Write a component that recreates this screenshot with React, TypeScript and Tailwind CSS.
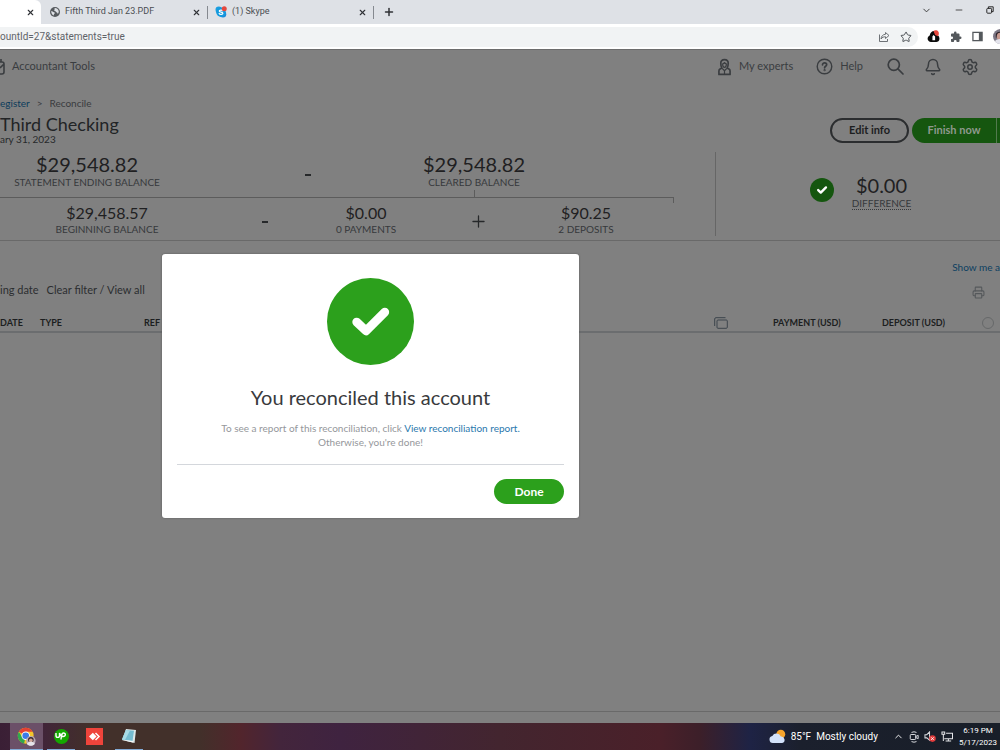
import React from "react";
import { Bell, Settings, Star, X, Plus, ChevronDown, ChevronUp, Minus, Printer } from "lucide-react";

function GlobeIcon() {
  return (
    <svg viewBox="0 0 16 16" className="size-[10px] shrink-0" aria-hidden="true">
      <circle cx="8" cy="8" r="8" fill="#565a5e" />
      <path d="M2 6.500c2 0 2.400 1.800 4.400 1.800 1.600 0 1.600 2 .6 2.600-.8.5-.6 2.300-1.400 2.500C3.400 12.600 1.700 10 2 6.500zM7.500 1.800c2.900-.2 5.600 1.700 6.400 4.600.3 1.500-.4 3.400-1.300 4.300-.9-.1-.7-1.900-2-2.200-1.600-.3-1-2.100-2.600-2.300-1.400-.2-1.800-1.200-.9-2 .6-.5-.2-1.500.4-2.400z" fill="#dee1e6" />
    </svg>
  );
}

function SkypeIcon() {
  return (
    <svg viewBox="0 0 24 24" className="size-[12px] shrink-0" aria-hidden="true">
      <circle cx="7.500" cy="7.500" r="6.500" fill="#1b9fe0" />
      <circle cx="16" cy="16.500" r="6.500" fill="#1b8bdc" />
      <circle cx="12" cy="12.500" r="9.500" fill="#149ade" />
      <path d="M15.500 9.500c-1-2-7-2-7 .6 0 3 7.300 1.600 7.300 4.600 0 2.800-6.300 2.900-7.500.2" fill="none" stroke="#fff" strokeWidth="2.400" strokeLinecap="round" />
      <circle cx="18.500" cy="5.500" r="5" fill="#e5483e" />
    </svg>
  );
}

function ShareIcon() {
  return (
    <svg viewBox="0 0 24 24" className="size-[12px]" fill="none" stroke="#5f6368" strokeWidth="1.800" strokeLinejoin="round" aria-hidden="true">
      <path d="M3 7v14h16v-5" />
      <path d="M15 3l7 6-7 6v-3.500c-4 0-6.500 1-9 4.500.5-5.500 3.500-9 9-9.500z" />
    </svg>
  );
}

function CloudExtensionIcon() {
  return (
    <svg viewBox="0 0 24 24" className="size-[13px]" aria-hidden="true">
      <path d="M7 22a6 6 0 0 1-5-9c1-2 2-2.500 3-3C6 5 9 2 13 2c4 0 6 3 6 7 3 1.500 4 4 4 7 0 4-3 6-6 6z" fill="#0b0b0b" />
      <path d="M12 9l3 3v7h-5v-7z" fill="#fff" />
      <path d="M12 2c2-2 7-2 9 1 1.500 2.500 1 6-1 8.500L15 9z" fill="#e8483d" />
    </svg>
  );
}

function PuzzleIcon() {
  return (
    <svg viewBox="0 0 24 24" className="size-[12px]" fill="#54585c" aria-hidden="true">
      <path d="M20.500 11H19V7a2 2 0 0 0-2-2h-4V3.500a2.500 2.500 0 0 0-5 0V5H4a2 2 0 0 0-2 2v3.800h1.500a2.700 2.700 0 0 1 0 5.400H2V20c0 1.100.9 2 2 2h3.800v-1.500a2.700 2.700 0 0 1 5.400 0V22H17a2 2 0 0 0 2-2v-4h1.500a2.500 2.500 0 0 0 0-5z" />
    </svg>
  );
}

function PanelIcon() {
  return (
    <svg viewBox="0 0 12 12" className="size-[11px]" aria-hidden="true">
      <rect x="1" y="1.500" width="10" height="9" fill="none" stroke="#54585c" strokeWidth="1.400" />
      <rect x="7.500" y="1.500" width="3.500" height="9" fill="#54585c" />
    </svg>
  );
}

function AvatarIcon() {
  return (
    <svg viewBox="0 0 16 16" className="size-[15px] shrink-0" aria-hidden="true">
      <circle cx="8" cy="8" r="8" fill="#7b7684" />
      <path d="M3 6c0-4 10-4 10 0v3H3z" fill="#2d2329" />
      <circle cx="8" cy="8" r="4" fill="#c99a90" />
      <path d="M2 13c2-3 10-3 12 0-3 4-9 4-12 0z" fill="#e4e4ec" />
    </svg>
  );
}

function RestoreIcon() {
  return (
    <svg viewBox="0 0 10 10" className="size-[8px]" fill="none" stroke="#222" strokeWidth="1.200" aria-hidden="true">
      <rect x="1" y="3" width="6" height="6" rx="1" />
      <path d="M3 3V1h6v6H7" />
    </svg>
  );
}

function ExpertIcon() {
  return (
    <svg viewBox="0 0 14 18" className="h-[18px] w-[13px]" fill="none" stroke="#3a3d40" strokeWidth="1.800" strokeLinejoin="round" aria-hidden="true">
      <path d="M7 1C4.200 1 3 2.800 3 5c0 2.500.3 3.800 1.200 5.200L2.200 11.200C1.300 11.700 1 12.300 1 13.200V17h12v-3.800c0-.9-.3-1.500-1.200-2l-2-1C10.700 8.800 11 7.500 11 5c0-2.200-1.200-4-4-4z" />
      <path d="M5 5.500c0 2.500.5 4 2 4s2-1.500 2-4c-1 0-1.600-.4-2-1.200-.4.8-1 1.200-2 1.200zM4.500 10.500L7 13l2.500-2.500M7 13v4" strokeWidth="1.300" />
    </svg>
  );
}

function HelpIcon() {
  return (
    <svg viewBox="0 0 18 18" className="size-[17px]" fill="none" stroke="#3a3d40" strokeWidth="1.500" strokeLinecap="round" aria-hidden="true">
      <circle cx="9" cy="9" r="7.700" />
      <path d="M6.900 7.200c0-2.900 4.400-2.700 4.400 0 0 1.500-2.200 1.600-2.200 3.200" strokeWidth="1.800" />
      <circle cx="9.100" cy="12.900" r=".4" />
    </svg>
  );
}

function SearchIcon() {
  return (
    <svg viewBox="0 0 17 17" className="size-[17px]" fill="none" stroke="#3a3d40" strokeWidth="1.700" strokeLinecap="round" aria-hidden="true">
      <circle cx="6.800" cy="6.800" r="5.600" />
      <path d="M10.900 10.900L16 16" />
    </svg>
  );
}

function CheckBadge({ className }: { className: string }) {
  return (
    <svg viewBox="0 0 88 88" className={className} aria-hidden="true">
      <circle cx="44" cy="44" r="44" fill="currentColor" />
      <path d="M30 44.500l9.500 9L58.500 34.500" fill="none" stroke="#fff" strokeWidth="8.800" strokeLinecap="round" strokeLinejoin="round" />
    </svg>
  );
}

function BrowserTab({ icon, title, className }: { icon: React.ReactNode; title: string; className: string }) {
  return (
    <div className={"flex items-center " + className}>
      {icon}
      <span className="ml-[5px] flex-1 truncate text-[9px] text-[#4a4e52]">{title}</span>
      <button aria-label={"Close " + title} className="mr-[6px]">
        <X className="size-[9px] text-[#303236]" strokeWidth={3} />
      </button>
    </div>
  );
}

function BrowserChrome() {
  return (
    <header className="font-[Roboto,'Open_Sans',sans-serif]">
      <div className="flex h-6 items-stretch bg-[#dee1e6]">
        <div className="flex w-[41px] items-center justify-end rounded-tr-md bg-white">
          <button aria-label="Close tab" className="mr-[6px]">
            <X className="size-[9px] text-[#303236]" strokeWidth={3} />
          </button>
        </div>
        <div className="flex flex-1 items-center">
          <BrowserTab icon={<GlobeIcon />} title="Fifth Third Jan 23.PDF" className="ml-[9px] w-[157px]" />
          <span className="h-[13px] w-px bg-[#85898f]" />
          <BrowserTab icon={<SkypeIcon />} title="(1) Skype" className="ml-[7px] w-[158px]" />
          <span className="h-[13px] w-px bg-[#85898f]" />
          <button aria-label="New tab" className="ml-[9px]">
            <Plus className="size-3 text-[#303236]" strokeWidth={3} />
          </button>
        </div>
        <div className="flex items-center gap-[22px] pr-[6px] pb-1">
          <button aria-label="Search tabs"><ChevronDown className="size-[11px] text-[#333]" /></button>
          <button aria-label="Minimize"><Minus className="size-[10px] text-[#333]" /></button>
          <button aria-label="Restore"><RestoreIcon /></button>
        </div>
      </div>
      <div className="flex h-[25px] items-center overflow-hidden bg-white">
        <div className="flex h-[20px] flex-1 items-center rounded-r-full bg-[#f1f3f4] pr-[6px]">
          <input
            aria-label="Address"
            readOnly
            value="ountId=27&statements=true"
            className="min-w-0 flex-1 bg-transparent text-[10px] text-[#5f6368] outline-none"
          />
          <button aria-label="Share" className="mr-[10px]"><ShareIcon /></button>
          <button aria-label="Bookmark"><Star className="size-3 text-[#4e5256]" /></button>
        </div>
        <div className="flex w-[82px] shrink-0 items-center gap-[10px] pl-[9px]">
          <button aria-label="Cloud extension"><CloudExtensionIcon /></button>
          <button aria-label="Extensions"><PuzzleIcon /></button>
          <button aria-label="Side panel"><PanelIcon /></button>
          <button aria-label="Profile"><AvatarIcon /></button>
        </div>
      </div>
    </header>
  );
}

function TopNav() {
  return (
    <nav className="flex h-[34px] items-center border-t border-[#6c6c6c] pr-[21px] text-[11px] text-[#3a3d40]">
      <button className="flex items-center gap-[7px]">
        <svg viewBox="0 0 5 16" className="h-[16px] w-[5px]" fill="none" stroke="#3a3d40" strokeWidth="1.600" aria-hidden="true">
          <path d="M0 3h2q2 0 2 2v8q0 2-2 2H0M0 9l4-4M1 0v3" />
        </svg>
        Accountant Tools
      </button>
      <button className="ml-auto flex items-center gap-2"><ExpertIcon />My experts</button>
      <button className="ml-[23px] flex items-center gap-[7px]"><HelpIcon />Help</button>
      <button aria-label="Search" className="ml-[24px]"><SearchIcon /></button>
      <button aria-label="Notifications" className="ml-5"><Bell className="size-[18px]" strokeWidth={2} /></button>
      <button aria-label="Settings" className="ml-[19px]"><Settings className="size-[18px]" strokeWidth={2} /></button>
    </nav>
  );
}

function Amount({ value, label, large = false }: { value: string; label: string; large?: boolean }) {
  return (
    <div className="text-center whitespace-nowrap">
      <div className={large ? "text-[20px] leading-6 text-[#1f2022]" : "text-[16px] leading-5 text-[#1f2022]"}>{value}</div>
      <div className="text-[10px] leading-3 text-[#37393c]">{label}</div>
    </div>
  );
}

function Summary() {
  return (
    <section className="grid grid-cols-[716fr_284fr] border-b border-[#696969] pt-[6px] pb-1">
      <div className="border-r border-[#666] pb-px">
        <div className="grid grid-cols-[208fr_200fr_132fr_175fr]">
          <div className="pr-[34px]"><Amount large value="$29,548.82" label="STATEMENT ENDING BALANCE" /></div>
          <div className="flex items-center justify-center"><span className="h-[2px] w-[6px] bg-[#26282a]" /></div>
          <div>
            <Amount large value="$29,548.82" label="CLEARED BALANCE" />
            <div className="mx-auto mt-[2px] h-[7px] w-px bg-[#5c5c5c]" />
          </div>
        </div>
        <div className="mr-[41px] h-[6px] border-t border-r border-[#5c5c5c]" />
        <div className="grid grid-cols-[214fr_102fr_100fr_124fr_92fr_83fr]">
          <Amount value="$29,458.57" label="BEGINNING BALANCE" />
          <div className="flex items-center justify-center pt-[6px]"><span className="h-[2px] w-[6px] bg-[#26282a]" /></div>
          <Amount value="$0.00" label="0 PAYMENTS" />
          <div className="flex items-center justify-center pt-1"><Plus className="size-[19px] text-[#26282a]" strokeWidth={1.6} /></div>
          <Amount value="$90.25" label="2 DEPOSITS" />
        </div>
      </div>
      <div className="flex items-start justify-center gap-[18px] pt-[21px] pl-[5px]">
        <CheckBadge className="mt-[5px] size-6 text-[#15560f]" />
        <div className="text-center">
          <div className="text-[20px] leading-6 text-[#1f2022]">$0.00</div>
          <div className="border-b border-dotted border-[#37393c] text-[10px] leading-3 text-[#37393c]">DIFFERENCE</div>
        </div>
      </div>
    </section>
  );
}

function Transactions() {
  return (
    <section className="flex flex-1 flex-col">
      <div className="flex h-[73px] justify-between pt-[18px]">
        <div className="flex items-center gap-2 pt-[8px] text-[11px] text-[#2c2e30]">
          <span>ing date</span>
          <button>Clear filter / View all</button>
        </div>
        <div className="flex flex-col gap-[11px] whitespace-nowrap">
          <a href="#around" className="text-[10px] leading-4 text-[#0c3f60]">Show me a</a>
          <button aria-label="Print" className="ml-5 self-start"><Printer className="size-[13px] text-[#55585b]" /></button>
        </div>
      </div>
      <table className="w-full table-fixed border-b-2 border-[#6b6d6f] text-left text-[9px] text-[#1c1e20]">
        <colgroup>
          <col className="w-[4%]" />
          <col className="w-[10.4%]" />
          <col className="w-[57%]" />
          <col className="w-[5.9%]" />
          <col className="w-[10.9%]" />
          <col className="w-[10%]" />
          <col />
        </colgroup>
        <thead>
          <tr className="h-[18px] whitespace-nowrap">
            <th>DATE</th>
            <th>TYPE</th>
            <th>REF</th>
            <th>
              <button aria-label="Copy" className="block">
                <svg viewBox="0 0 14 12" className="h-[12px] w-[14px]" fill="none" stroke="#3c444c" aria-hidden="true">
                  <path d="M.7 9V2q0-1.300 1.300-1.300h9.500" />
                  <rect x="3" y="3" width="10.300" height="8.300" rx="1" />
                </svg>
              </button>
            </th>
            <th>PAYMENT (USD)</th>
            <th>DEPOSIT (USD)</th>
            <th>
              <input type="radio" aria-label="Select all" className="block size-[12px] appearance-none rounded-full border border-[#666869]" />
            </th>
          </tr>
        </thead>
      </table>
      <div className="mb-[11px] flex-1 border-b border-[#696969]" />
    </section>
  );
}

function SuccessDialog() {
  return (
    <div
      role="dialog"
      aria-labelledby="dialog-title"
      className="absolute top-[254px] left-[162px] flex w-[417px] flex-col items-center rounded-[3px] bg-white px-[15px] pt-6 pb-[14px] shadow-[0_0_2px_#555]"
    >
      <CheckBadge className="size-[87px] text-[#2ca01c]" />
      <h2 id="dialog-title" className="mt-[18px] text-[20px] leading-7 text-[#393a3d]">You reconciled this account</h2>
      <p className="mt-[10px] text-center text-[10px] leading-[14px] text-[#95979b]">
        To see a report of this reconciliation, click{" "}
        <a href="#report" className="text-[#2a78ad]">View reconciliation report.</a>
        <br />
        Otherwise, you're done!
      </p>
      <div className="mt-[15px] flex w-full justify-end border-t border-[#d4d7dc] pt-[14px]">
        <button className="h-[25px] w-[70px] rounded-full bg-[#2ca01c] text-[12px] font-bold text-white">Done</button>
      </div>
    </div>
  );
}

function ChromeIcon() {
  return (
    <svg viewBox="0 0 24 24" className="size-[19px]" aria-hidden="true">
      <circle cx="11" cy="11" r="10" fill="#f5c52c" />
      <path d="M11 11L2.300 6A10 10 0 0 1 19.700 6H11z" fill="#e34133" />
      <path d="M11 11l-2 9.800A10 10 0 0 1 2.300 6L7 13.500z" fill="#2fa84f" />
      <circle cx="11" cy="11" r="5.300" fill="#fff" />
      <circle cx="11" cy="11" r="4.200" fill="#3a7be8" />
      <circle cx="17.500" cy="17.500" r="6" fill="#b8a9b4" />
      <circle cx="17.500" cy="16" r="3.500" fill="#36262d" />
      <circle cx="17.500" cy="17" r="2.400" fill="#d2a497" />
      <path d="M12.500 21c2-3 8-3 10 0-2 3.500-8 3.500-10 0z" fill="#e6e4ea" />
    </svg>
  );
}

function Taskbar() {
  return (
    <footer className="flex h-[27px] items-stretch bg-[linear-gradient(90deg,#3a1f35_0%,#41243a_4%,#42302a_9%,#42302a_20%,#52252c_24%,#43253c_28%,#3f2340_34%,#43252f_50%,#4a2029_66%,#3c1f29_70%,#1e2345_75%,#1b202d_80%,#181e28_100%)] pr-[3px] pl-[10px] font-[Roboto,'Open_Sans',sans-serif] text-white">
      <button aria-label="Chrome" className="flex w-[33px] items-center justify-center border-b border-[#83acd8] bg-[#6b5068]"><ChromeIcon /></button>
      <button aria-label="Upwork" className="ml-1 flex w-7 items-center justify-center border-b border-[#83acd8]">
        <span className="flex size-[15px] items-center justify-center rounded-full bg-[#14a800]">
          <svg viewBox="0 0 24 16" className="h-[8px] w-[12px]" fill="none" stroke="#fff" strokeWidth="2.800" aria-hidden="true">
            <path d="M2 2v5c0 5 7 5 7 0V2c1 4 3 7 7 7 6 0 6-7 1-7-4 0-4 4-5 13" />
          </svg>
        </span>
      </button>
      <button aria-label="AnyDesk" className="ml-[11px] flex items-center">
        <svg viewBox="0 0 17 17" className="size-[17px]" aria-hidden="true">
          <path d="M0 0h17v17H0z" fill="#ef443b" />
          <path d="M3 8.500L6.800 4.700l3.800 3.800-3.800 3.800z" fill="#fff" />
          <path d="M9.500 5l3.500 3.500L9.500 12" fill="none" stroke="#fff" strokeWidth="1.500" />
        </svg>
      </button>
      <button aria-label="Notepad" className="ml-3 flex w-7 items-center justify-center border-b border-[#83acd8]">
        <svg viewBox="0 0 16 16" className="size-[16px]" aria-hidden="true">
          <path d="M5 1l10 1-1.500 13L1 12z" fill="#dce8e9" />
          <path d="M5 2l8 .8L11.500 13 1 11.500z" fill="#75bcd0" />
          <path d="M5 2l4 .4L4 12l-3-.5z" fill="#a7dbe5" />
          <path d="M1 12l11 1v1.500z" fill="#f5f7f7" />
        </svg>
      </button>
      <button className="ml-auto flex items-center text-[10px]">
        <svg viewBox="0 0 18 15" className="mr-[5px] h-[15px] w-[17px]" aria-hidden="true">
          <circle cx="12.500" cy="5" r="4.700" fill="#f5a32b" />
          <path d="M4 14.500a3.800 3.800 0 0 1-.5-7.500A5 5 0 0 1 12.500 7.500a3.600 3.600 0 0 1 1.500 7z" fill="#d3e2fb" />
        </svg>
        <span>85°F</span>
        <span className="ml-[5px]">Mostly cloudy</span>
      </button>
      <div className="ml-[15px] flex items-center gap-[5px]">
        <button aria-label="Hidden icons"><ChevronUp className="size-[11px]" /></button>
        <svg viewBox="0 0 12 14" className="h-[12px] w-[10px]" fill="none" stroke="#d8dade" strokeWidth="1.200" aria-hidden="true">
          <path d="M3 1.500q3-1.500 6 0M3 12.500q3 1.500 6 0" /><rect x="1.500" y="4" width="6.500" height="6" rx="1" /><path d="M8 6.500L11 5v4L8 7.500" />
        </svg>
        <svg viewBox="0 0 13 12" className="h-[11px] w-[12px]" aria-hidden="true">
          <path d="M1 4h2l3-3v9L3 7.500H1z" fill="none" stroke="#d8dade" strokeWidth="1.100" />
          <circle cx="9.200" cy="8.300" r="3.600" fill="#e03c3c" />
          <path d="M7.800 6.900l2.800 2.800m0-2.800L7.800 9.700" stroke="#fff" />
        </svg>
        <svg viewBox="0 0 13 12" className="h-[11px] w-[12px]" fill="none" stroke="#e6e7ea" strokeWidth="1.100" aria-hidden="true">
          <path d="M5.500 2.500h7v6h-9M8 8.500v2M5 11h6M2.500 5v6M1 1v2.500h3V1zM2.500 3.500V5" />
        </svg>
      </div>
      <div className="ml-[6px] flex flex-col items-center justify-center text-[8px] leading-3 whitespace-nowrap">
        <span>6:19 PM</span>
        <span>5/17/2023</span>
      </div>
    </footer>
  );
}

export default function App() {
  return (
    <div className="relative flex min-h-screen flex-col overflow-hidden bg-[#808080] font-[Lato,'Open_Sans',sans-serif]">
      <BrowserChrome />
      <main className="flex flex-1 flex-col">
        <TopNav />
        <div className="flex justify-between pt-[13px]">
          <div>
            <div className="text-[10px] leading-[14px] text-[#393b3e]">
              <a href="#register" className="text-[#0d3c5b]">egister</a>
              <span className="mx-[7px]">&gt;</span>
              <span>Reconcile</span>
            </div>
            <h1 className="mt-1 text-[18px] leading-5 text-[#222426]">Third Checking</h1>
            <p className="pb-px text-[10px] leading-[11px] text-[#27292b]">ary 31, 2023</p>
          </div>
          <div className="flex items-center gap-[3px] pt-[18px] text-[11px] font-bold">
            <button className="h-[25px] w-[79px] rounded-full border-2 border-[#2b2d2f] text-[#1c1d1f]">Edit info</button>
            <button className="flex h-[25px] w-[88px] items-center rounded-l-full bg-[#15560f] text-[#8f998e]">
              <span className="flex-1">Finish now</span>
              <span className="mr-[3px] h-full w-px bg-[#527a4e]" />
            </button>
          </div>
        </div>
        <Summary />
        <Transactions />
      </main>
      <Taskbar />
      <SuccessDialog />
    </div>
  );
}
